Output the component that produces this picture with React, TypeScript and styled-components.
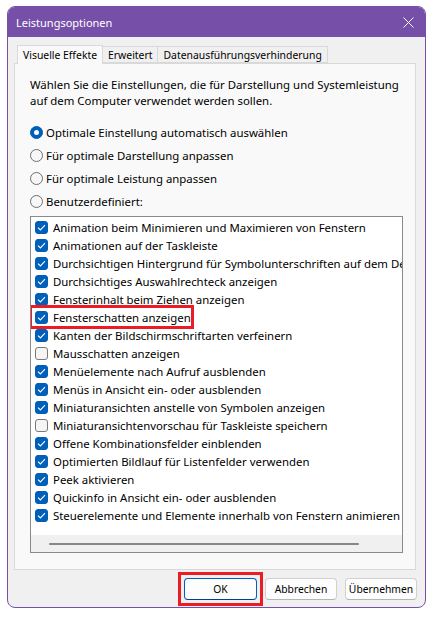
import React from 'react';
import styled, { createGlobalStyle } from 'styled-components';

const GlobalStyle = createGlobalStyle`
  html, body {
    margin: 0;
    background: #ffffff;
    font-family: "Noto Sans", "DejaVu Sans", sans-serif;
    font-size: 11.4px;
    color: #000;
  }
`;

const Page = styled.div`
  padding: 6px 0 0 7px;
`;

const Window = styled.div`
  width: 419px;
  height: 602px;
  box-sizing: border-box;
  border: 1px solid #7650a8;
  border-radius: 8px;
  background: #f0f0f0;
  overflow: hidden;
  display: flex;
  flex-direction: column;
`;

const TitleBar = styled.div`
  height: 30px;
  flex: none;
  background: #7650a8;
  color: #fff;
  display: flex;
  align-items: center;
  justify-content: space-between;
  padding: 0 11px 0 8px;
  font-size: 11px;
`;

const TabStrip = styled.div`
  display: flex;
  align-items: flex-end;
  height: 18px;
  margin: 8px 0 0 9px;
  position: relative;
  z-index: 1;
  font-size: 10.4px;
`;

const Tab = styled.div<{ $active?: boolean }>`
  box-sizing: border-box;
  height: ${p => (p.$active ? '19px' : '17px')};
  margin-bottom: ${p => (p.$active ? '-1px' : '0')};
  padding: 0 5px;
  display: flex;
  align-items: center;
  border: 1px solid #d9d9d9;
  border-bottom: ${p => (p.$active ? 'none' : '1px solid #d9d9d9')};
  margin-left: ${p => (p.$active ? '0' : '-1px')};
  background: ${p => (p.$active ? '#f9f9f9' : '#f0f0f0')};
  white-space: nowrap;
`;

const Panel = styled.div`
  box-sizing: border-box;
  height: 507px;
  margin: 0 9px 0 6px;
  border: 1px solid #d9d9d9;
  background: #f9f9f9;
  padding: 13px 12px 0 15px;
`;

const Description = styled.p`
  margin: 0;
  line-height: 16px;
  white-space: nowrap;
`;

const RadioGroup = styled.div`
  margin-top: 12px;
  display: flex;
  flex-direction: column;
`;

const RadioRow = styled.label`
  height: 23px;
  display: flex;
  align-items: center;
  gap: 3px;
`;

const RadioDot = styled.span<{ $checked?: boolean }>`
  box-sizing: border-box;
  width: 13px;
  height: 13px;
  border-radius: 50%;
  flex: none;
  display: flex;
  align-items: center;
  justify-content: center;
  background: ${p => (p.$checked ? '#005fb8' : '#f7f7f7')};
  border: 1px solid ${p => (p.$checked ? '#005fb8' : '#6e6e6e')};

  &::after {
    content: '';
    display: ${p => (p.$checked ? 'block' : 'none')};
    width: 5px;
    height: 5px;
    border-radius: 50%;
    background: #fff;
  }
`;

const ListBox = styled.div`
  box-sizing: border-box;
  margin-top: 3px;
  width: 373px;
  height: 337px;
  border: 1px solid #8a8a8a;
  background: #fff;
  display: flex;
  flex-direction: column;
  overflow: hidden;
`;

const Items = styled.div`
  flex: 1;
  padding: 1px 0 0 4px;
  overflow: hidden;
`;

const Item = styled.div`
  height: 18px;
  display: flex;
  align-items: center;
  white-space: nowrap;
`;

const ItemInner = styled.span<{ $marked?: boolean }>`
  display: inline-flex;
  align-items: center;
  gap: 5px;
  height: 18px;
  box-sizing: border-box;
  ${p =>
    p.$marked &&
    `
    outline: 3px solid #ed1c24;
    margin-left: -3px;
    padding: 0 0 0 3px;
  `}
`;

const Check = styled.span<{ $checked?: boolean }>`
  box-sizing: border-box;
  width: 13px;
  height: 13px;
  flex: none;
  border-radius: 3px;
  display: flex;
  align-items: center;
  justify-content: center;
  background: ${p => (p.$checked ? '#005fb8' : '#f5f5f5')};
  border: 1px solid ${p => (p.$checked ? '#005fb8' : '#7a7a7a')};
`;

const ScrollBar = styled.div`
  height: 17px;
  flex: none;
  background: #f0f0f0;
  display: flex;
  align-items: center;
  padding-left: 18px;
`;

const Thumb = styled.div`
  width: 310px;
  height: 2px;
  border-radius: 1px;
  background: #868686;
`;

const Footer = styled.div`
  display: flex;
  justify-content: flex-end;
  gap: 8px;
  margin-top: 8px;
  padding-right: 8px;
`;

const Marker = styled.span`
  display: inline-flex;
  outline: 3px solid #ed1c24;
  outline-offset: 3px;
`;

const Button = styled.button<{ $primary?: boolean }>`
  box-sizing: border-box;
  width: ${p => (p.$primary ? '73px' : '72px')};
  height: 22px;
  padding: 0;
  font-family: inherit;
  font-size: 10.3px;
  color: #000;
  background: #fdfdfd;
  border: 1px solid ${p => (p.$primary ? '#005fb8' : '#d0d0d0')};
  border-bottom-color: ${p => (p.$primary ? '#003e92' : '#b5b5b5')};
  border-radius: 4px;
`;

const options = [
  'Optimale Einstellung automatisch auswählen',
  'Für optimale Darstellung anpassen',
  'Für optimale Leistung anpassen',
  'Benutzerdefiniert:',
];

const effects: [string, boolean][] = [
  ['Animation beim Minimieren und Maximieren von Fenstern', true],
  ['Animationen auf der Taskleiste', true],
  ['Durchsichtigen Hintergrund für Symbolunterschriften auf dem Desktop', true],
  ['Durchsichtiges Auswahlrechteck anzeigen', true],
  ['Fensterinhalt beim Ziehen anzeigen', true],
  ['Fensterschatten anzeigen', true],
  ['Kanten der Bildschirmschriftarten verfeinern', true],
  ['Mausschatten anzeigen', false],
  ['Menüelemente nach Aufruf ausblenden', true],
  ['Menüs in Ansicht ein- oder ausblenden', true],
  ['Miniaturansichten anstelle von Symbolen anzeigen', true],
  ['Miniaturansichtenvorschau für Taskleiste speichern', false],
  ['Offene Kombinationsfelder einblenden', true],
  ['Optimierten Bildlauf für Listenfelder verwenden', true],
  ['Peek aktivieren', true],
  ['Quickinfo in Ansicht ein- oder ausblenden', true],
  ['Steuerelemente und Elemente innerhalb von Fenstern animieren', true],
];

const CheckMark = () => (
  <svg width="9" height="7" viewBox="0 0 9 7">
    <path d="M1 3.6 L3.4 6 L8 1.2" fill="none" stroke="#fff" strokeWidth="1.1" />
  </svg>
);

const CloseIcon = () => (
  <svg width="11" height="11" viewBox="0 0 11 11">
    <path d="M0.5 0.5 L10.5 10.5 M10.5 0.5 L0.5 10.5" stroke="#fff" strokeWidth="1" />
  </svg>
);

const App: React.FC = () => {
  return (
    <Page>
      <GlobalStyle />
      <Window>
        <TitleBar>
          <span>Leistungsoptionen</span>
          <CloseIcon />
        </TitleBar>

        <TabStrip>
          <Tab $active>Visuelle Effekte</Tab>
          <Tab>Erweitert</Tab>
          <Tab>Datenausführungsverhinderung</Tab>
        </TabStrip>

        <Panel>
          <Description>
            Wählen Sie die Einstellungen, die für Darstellung und Systemleistung
            <br />
            auf dem Computer verwendet werden sollen.
          </Description>

          <RadioGroup>
            {options.map((o, i) => (
              <RadioRow key={o}>
                <RadioDot $checked={i === 0} />
                <span>{o}</span>
              </RadioRow>
            ))}
          </RadioGroup>

          <ListBox>
            <Items>
              {effects.map(([label, on]) => (
                <Item key={label}>
                  <ItemInner $marked={label === 'Fensterschatten anzeigen'}>
                    <Check $checked={on}>{on && <CheckMark />}</Check>
                    <span>{label}</span>
                  </ItemInner>
                </Item>
              ))}
            </Items>
            <ScrollBar>
              <Thumb />
            </ScrollBar>
          </ListBox>
        </Panel>

        <Footer>
          <Marker>
            <Button $primary>OK</Button>
          </Marker>
          <Button>Abbrechen</Button>
          <Button>Übernehmen</Button>
        </Footer>
      </Window>
    </Page>
  );
};

export default App;
